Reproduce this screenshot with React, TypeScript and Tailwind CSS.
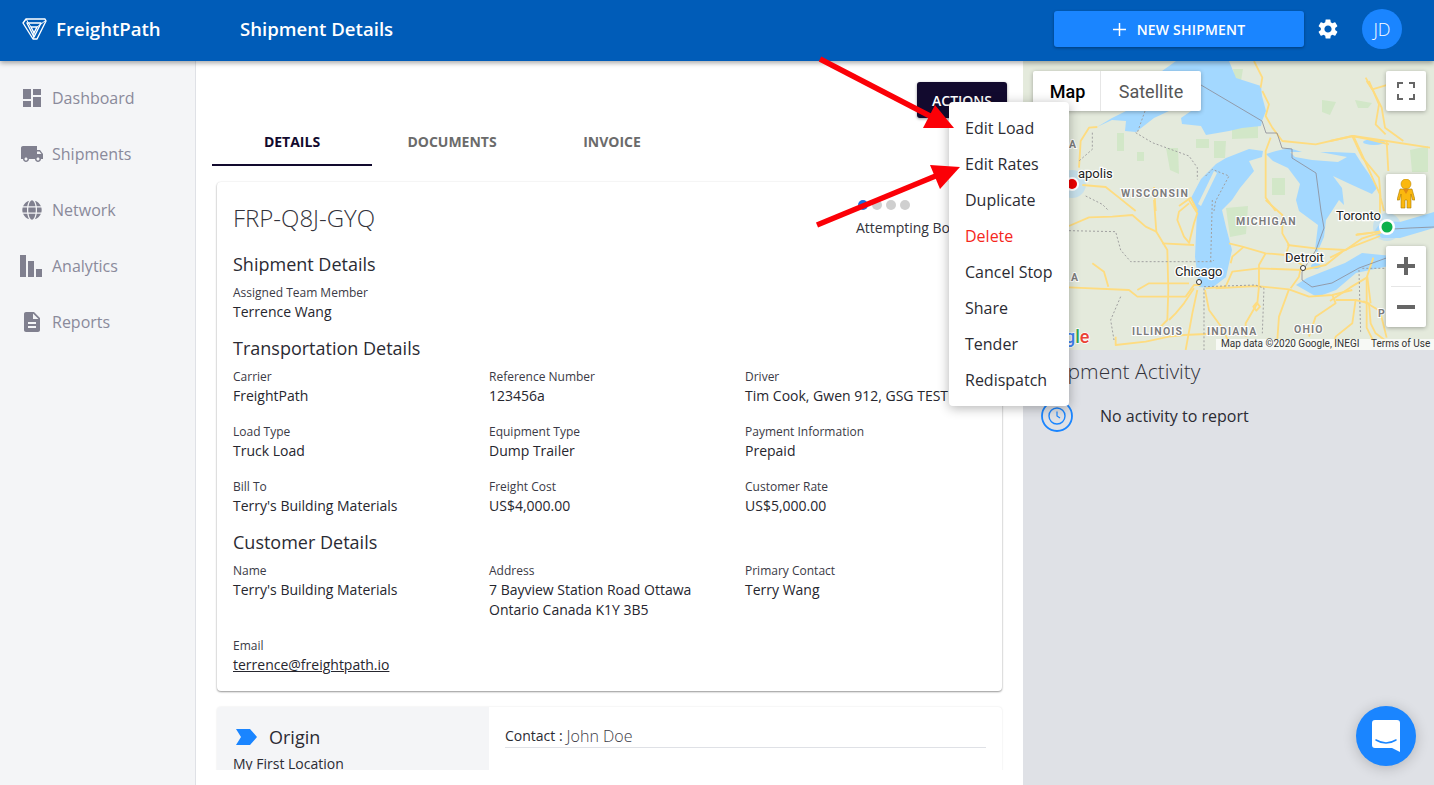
import { FaGlobe } from "react-icons/fa";
import { MdDashboard, MdDescription, MdLocalShipping, MdSettings } from "react-icons/md";

const navItems = [
	{ label: "Dashboard", icon: <MdDashboard size={24} /> },
	{ label: "Shipments", icon: <MdLocalShipping size={28} /> },
	{ label: "Network", icon: <FaGlobe size={20} /> },
	{ label: "Analytics", icon: <BarsIcon /> },
	{ label: "Reports", icon: <MdDescription size={24} /> },
];

const menuItems = ["Edit Load", "Edit Rates", "Duplicate", "Delete", "Cancel Stop", "Share", "Tender", "Redispatch"];

// road and border paths are traced from 3x crops, so each group has its own offset
const roadsNorth = [
	"M85 198 L60 200 L35 240 L30 320",
	"M40 372 L110 378 L150 410 L200 450",
	"M255 378 L260 450",
	"M330 435 L365 410 L385 450",
	"M605 230 L590 270 L590 410 L620 450",
	"M555 0 L580 50 L575 80",
	"M580 90 L600 130 L590 165 L610 200 L640 240 L740 250 L850 225 L900 235 L960 250",
	"M850 225 L880 290 L930 350 L935 410 L945 450",
	"M890 50 L910 85 L960 70",
	"M900 60 L930 130 L920 190 L950 220",
];
const roadsSouth = [
	"M0 78 L60 52 L130 50 L190 45 L230 80 L262 95",
	"M255 0 L262 95 L295 150 L298 270 L295 360 L270 385",
	"M280 130 L375 135",
	"M360 0 L385 40 L375 70 L360 130",
	"M360 10 L330 35 L325 60 L345 110 L362 130",
	"M0 262 L180 270 L205 290 L350 290 L375 255 L395 255",
	"M205 270 L240 250 L360 250",
	"M70 190 L105 215 L118 260",
	"M375 265 L345 310 L320 340 L300 360",
	"M385 270 L370 340 L350 450",
	"M408 270 L420 330 L460 385 L490 450",
	"M140 410 L140 435 L230 425 L300 410 L345 405 L410 402 L470 402",
	"M410 265 L470 260 L490 215 L570 205 L700 210",
	"M480 130 L520 140 L590 160 L650 165 L700 195",
	"M485 190 L490 170 L525 140",
	"M590 160 L570 195 L570 260 L565 310 L530 370 L530 410",
	"M553 320 L563 308 L573 320 L562 332 Z",
	"M440 265 L560 258 L660 268 L720 290 L790 285 L850 270",
	"M660 268 L630 350 L625 420",
	"M665 265 L690 230 L695 205",
	"M590 0 L640 45 L640 100 L660 135 L650 165",
	"M655 135 L740 145 L830 150 L880 115 L960 90",
	"M700 210 L770 195 L820 155",
	"M790 285 L800 310 L740 350 L720 410",
	"M800 300 L860 300 L900 310 L905 370 L920 400 L960 430",
	"M895 230 L905 310",
	"M860 300 L850 370 L800 410 L790 450",
	"M860 105 L930 95 L950 85",
];
const roadsEast = [
	"M0 240 L70 225 L170 240 L300 260",
	"M70 225 L100 290 L150 400 L150 470",
	"M170 240 L175 330",
	"M110 60 L130 90 L155 140 L165 200 L220 240",
	"M0 590 L60 560 L150 525",
	"M80 520 L130 515",
	"M0 720 L60 680 L110 650 L130 590",
	"M110 650 L110 800 L130 840",
	"M100 720 L150 750 L170 830",
];
const bordersNorth = [
	"M200 215 L250 245 L360 285 L385 320 L385 355",
	"M228 150 L205 215",
	"M70 215 L70 265 L30 300",
	"M50 405 L100 430 L120 450",
	"M410 345 L430 325 L480 345 L440 420 L435 450",
];
const bordersSouth = [
	"M0 92 L140 95 L155 150 L185 185 L430 185 L435 180",
	"M155 290 L125 360 L135 420",
	"M405 265 L405 450",
	"M430 0 L425 185",
	"M405 260 L560 255 L585 265 L580 400",
	"M870 210 L875 400",
	"M880 205 L960 205",
];

function BarsIcon() {
	return (
		<svg className="-ml-[2px]" width="22" height="22" viewBox="0 0 22 22" fill="currentColor">
			<rect x="0" y="0" width="6" height="22" />
			<rect x="8" y="6" width="6" height="16" />
			<rect x="16" y="14" width="6" height="8" />
		</svg>
	);
}

function Logo() {
	return (
		<svg width="26" height="24" viewBox="0 0 26 24" fill="none" stroke="white" strokeWidth="1.4" strokeLinejoin="round">
			<path d="M2 6 L5 2 H24 L25 4 L16 22 H12 Z" />
			<path d="M6 6 H20 L13 20 Z" />
			<path d="M10 10 H16 L13 16 Z" />
			<path d="M5 2 L10 10 M24 4 L16 10 M12 22 L13 16" strokeWidth="1" />
		</svg>
	);
}

function Field({ label, children }: { label: string; children: React.ReactNode }) {
	return (
		<div>
			<div className="h-5 text-[12px] leading-[22px] text-[#3a3a46]">{label}</div>
			<div className="text-[14px] leading-5 text-[#26262e]">{children}</div>
		</div>
	);
}

function SectionTitle({ children, className }: { children: React.ReactNode; className: string }) {
	return <h2 className={`text-[18px] leading-6 text-[#2b2b33] ${className}`}>{children}</h2>;
}

function MapDrawing() {
	return (
		<svg className="block h-full w-full" viewBox="1023 61 411 289" fill="none">
			<rect x="1023" y="61" width="411" height="289" fill="#e4eadc" />
			<g fill="#d2e7c8">
				<path d="M1117 133 L1124 133 L1124 151 L1117 151 Z" />
				<path d="M1166 148 L1178 148 L1179 174 L1170 170 Z" />
				<path d="M1137 152 L1144 152 L1144 161 L1137 161 Z" />
				<path d="M1214 141 L1226 141 L1225 158 L1214 158 Z" />
				<path d="M1232 128 L1258 126 L1258 138 L1232 139 Z" />
				<path d="M1196 139 L1209 139 L1209 148 L1196 148 Z" />
				<path d="M1233 69 L1243 69 L1241 81 L1235 81 Z" />
				<path d="M1226 208 L1248 206 L1246 234 L1230 237 Z" />
				<path d="M1272 178 L1285 178 L1285 195 L1272 195 Z" />
				<path d="M1322 100 L1336 102 L1330 115 L1322 112 Z" />
				<path d="M1410 150 L1428 146 L1428 172 L1412 172 Z" />
				<path d="M1355 100 L1372 103 L1368 108 L1358 108 Z" />
			</g>
			<g fill="#a3d8ff">
				<path d="M1097 127 L1112 118 L1126 111 L1162 71 L1176 61 L1229 61 L1236 78 L1261 86 L1262 96 L1266 111 L1262 121 L1261 126 L1242 128 L1229 131 L1206 135 L1201 126 L1182 124 L1181 118 L1191 111 L1169 111 L1154 118 L1136 132 L1125 131 L1126 121 L1112 120 Z" />
				<path d="M1263 151 L1249 149 L1226 158 L1216 164 L1201 179 L1191 198 L1197 210 L1195 257 L1199 287 L1212 288 L1226 277 L1232 250 L1226 227 L1222 210 L1232 200 L1240 188 L1254 171 L1249 161 L1262 157 Z" />
				<path d="M1266 154 L1276 151 L1289 148 L1302 152 L1332 152 L1355 153 L1362 164 L1369 174 L1377 188 L1372 194 L1350 184 L1333 176 L1342 188 L1344 205 L1339 200 L1326 220 L1324 237 L1317 253 L1315 250 L1318 225 L1299 211 L1296 200 L1300 184 L1288 168 L1273 161 Z" />
				<path d="M1296 285 L1317 297 L1336 290 L1356 273 L1389 266 L1392 256 L1362 253 L1345 263 L1322 272 L1307 278 Z" />
				<path d="M1378 226 L1385 221 L1400 222 L1434 212 L1434 228 L1400 238 L1382 238 L1374 232 Z" />
				<ellipse cx="1316" cy="266" rx="5" ry="3" />
				<ellipse cx="1374" cy="142" rx="11" ry="3" />
				<circle cx="1072" cy="184" r="14" opacity="0.45" />
				<circle cx="1387" cy="227" r="14" opacity="0.45" />
			</g>
			{/* islands and peninsulas on top of the lakes */}
			<g fill="#e4eadc">
				<path d="M1290 152 L1320 152 L1347 157 L1338 162 L1312 160 L1295 157 Z" />
				<path d="M1214 171 L1217 173 L1201 206 L1198 204 Z" />
			</g>
			<g transform="translate(1069 61) scale(0.3333)" stroke="#fedc80" strokeWidth="5.5" strokeLinejoin="round">
				{roadsNorth.map((d) => (
					<path key={d} d={d} />
				))}
			</g>
			<g transform="translate(1069 200) scale(0.3333)" stroke="#fedc80" strokeWidth="5.5" strokeLinejoin="round">
				{roadsSouth.map((d) => (
					<path key={d} d={d} />
				))}
			</g>
			<g transform="translate(1330 61) scale(0.3333)" stroke="#fedc80" strokeWidth="5.5" strokeLinejoin="round">
				{roadsEast.map((d) => (
					<path key={d} d={d} />
				))}
			</g>
			<g transform="translate(1069 61) scale(0.3333)" stroke="#a0a0a0" strokeWidth="3" strokeDasharray="6 6">
				{bordersNorth.map((d) => (
					<path key={d} d={d} />
				))}
			</g>
			<g transform="translate(1069 200) scale(0.3333)" stroke="#a0a0a0" strokeWidth="3" strokeDasharray="6 6">
				{bordersSouth.map((d) => (
					<path key={d} d={d} />
				))}
			</g>
			<g stroke="#8c8c96" strokeWidth="0.8">
				<path d="M1201 85 L1262 121 L1266 133 L1277 133 L1282 148 L1292 149 L1292 158 L1316 173 L1321 211 L1324 228 L1316 250 L1302 272 L1302 280 L1312 287 L1332 283 L1359 268 L1389 257" />
				<path d="M1393 229 L1410 228 L1434 227" />
			</g>
			<g fontFamily="Roboto, sans-serif" fontSize="13" fill="#222" stroke="#fff" strokeWidth="2.5" paintOrder="stroke">
				<text x="1078" y="178">apolis</text>
				<text x="1336" y="220">Toronto</text>
				<text x="1175" y="276">Chicago</text>
				<text x="1285" y="262">Detroit</text>
			</g>
			<g fontFamily="Roboto, sans-serif" fontSize="10.5" fontWeight="700" letterSpacing="1.2" fill="#7d7d7d" stroke="#fff" strokeWidth="2" paintOrder="stroke">
				<text x="1121" y="197">WISCONSIN</text>
				<text x="1236" y="225">MICHIGAN</text>
				<text x="1132" y="335">ILLINOIS</text>
				<text x="1207" y="335">INDIANA</text>
				<text x="1294" y="333">OHIO</text>
				<text x="1071" y="281">A</text>
				<text x="1069" y="148">A</text>
				<text x="1378" y="317">P</text>
			</g>
			<text x="1065" y="343" fontFamily="Roboto, sans-serif" fontSize="18" fontWeight="500" stroke="#fff" strokeWidth="1.5" paintOrder="stroke">
				<tspan fill="#4285f4">g</tspan>
				<tspan fill="#34a853">l</tspan>
				<tspan fill="#ea4335">e</tspan>
			</text>
			<circle cx="1199" cy="282" r="2.5" fill="#fff" stroke="#333" />
			<circle cx="1303" cy="268" r="2.5" fill="#fff" stroke="#333" />
			<rect x="1216" y="339" width="218" height="11" fill="#fff" opacity="0.7" />
			<g fontFamily="Roboto, sans-serif" fontSize="10" fill="#333">
				<text x="1221" y="347">Map data ©2020 Google, INEGI</text>
				<text x="1371" y="347">Terms of Use</text>
			</g>
			<circle cx="1072" cy="184" r="7" fill="#fff" />
			<circle cx="1072" cy="184" r="5" fill="#ee0000" />
			<circle cx="1387" cy="227" r="8" fill="#fff" />
			<circle cx="1387" cy="227" r="5.5" fill="#0cb14b" />
		</svg>
	);
}

function MapPanel() {
	return (
		<div className="relative h-[289px]">
			<MapDrawing />
			<div className="absolute left-[10px] top-[10px] flex h-10 rounded-[2px] bg-white font-['Roboto',sans-serif] text-[18px] shadow-[0_1px_4px_rgba(0,0,0,0.3)]">
				<div className="flex w-[68px] items-center justify-center border-r border-[#e6e6e6] pl-[2px] font-medium text-black">Map</div>
				<div className="flex w-[100px] items-center justify-center text-[#565656]">Satellite</div>
			</div>
			<div className="absolute left-[363px] top-[10px] flex h-10 w-10 items-center justify-center rounded-[2px] bg-white shadow-[0_1px_4px_rgba(0,0,0,0.3)]">
				<svg width="18" height="18" viewBox="0 0 18 18" fill="none" stroke="#666" strokeWidth="2">
					<path d="M1 6V1H6M12 1H17V6M17 12V17H12M6 17H1V12" />
				</svg>
			</div>
			<div className="absolute left-[363px] top-[113px] flex h-10 w-10 items-center justify-center rounded-[2px] bg-white shadow-[0_1px_4px_rgba(0,0,0,0.3)]">
				<svg width="18" height="30" viewBox="0 0 18 30">
					<circle cx="9" cy="5" r="5" fill="#fbb80e" stroke="#b07f00" strokeWidth="0.5" />
					<path d="M3 10 H15 L18 21 L15.5 21 L14 15 V29 H10 V21 H8 V29 H4 V15 L2.5 21 L0 21 Z" fill="#fbb80e" stroke="#a87a00" strokeWidth="0.6" />
					<path d="M6 10 L9 15 L12 10 Z" fill="#e28a14" />
				</svg>
			</div>
			<div className="absolute left-[363px] top-[185px] flex h-[81px] w-10 flex-col items-center rounded-[2px] bg-white shadow-[0_1px_4px_rgba(0,0,0,0.3)]">
				<div className="flex h-10 w-full items-center justify-center">
					<svg width="18" height="18" viewBox="0 0 18 18" fill="#666">
						<path d="M7 0H11V7H18V11H11V18H7V11H0V7H7Z" />
					</svg>
				</div>
				<div className="h-px w-[30px] bg-[#e6e6e6]" />
				<div className="flex h-10 w-full items-center justify-center">
					<svg width="18" height="4" viewBox="0 0 18 4" fill="#666">
						<rect width="18" height="4" />
					</svg>
				</div>
			</div>
		</div>
	);
}

export default function App() {
	return (
		<div className="relative flex h-[785px] w-[1434px] flex-col overflow-hidden bg-white font-['Open_Sans',sans-serif]">
			{/* Top bar */}
			<header className="relative z-20 flex h-[61px] shrink-0 items-center bg-[#005cb8] pb-[3px] pl-[21px] pr-8 shadow-[0_2px_5px_rgba(0,0,0,0.35)]">
				<Logo />
				<span className="ml-[9px] w-[184px] text-[18.6px] font-semibold text-white">FreightPath</span>
				<span className="text-[18.6px] font-semibold text-white">Shipment Details</span>
				<button className="ml-auto flex h-9 w-[250px] items-center justify-center rounded-[3px] bg-[#1a85ff] text-[14px] font-semibold tracking-[0.2px] text-white shadow-[0_1px_3px_rgba(0,0,0,0.35)]">
					<svg className="mr-[11px]" width="13" height="13" viewBox="0 0 13 13" stroke="white" strokeWidth="1.5">
						<path d="M6.5 0V13M0 6.5H13" />
					</svg>
					NEW SHIPMENT
				</button>
				<MdSettings className="ml-3 text-white" size={24} />
				<div className="ml-[22px] flex h-10 w-10 items-center justify-center rounded-full bg-[#1a85ff] text-[18px] font-light text-white">JD</div>
			</header>

			<div className="flex min-h-0 flex-1">
				{/* Sidebar */}
				<aside className="w-[196px] shrink-0 border-r border-[#dfe1e6] bg-[#f4f5f7] pt-[9px] text-[#8a8a9b]">
					{navItems.map((item) => (
						<div key={item.label} className="flex h-14 items-center">
							<div className="ml-5 mr-2 flex w-6 justify-center text-[#80808f]">{item.icon}</div>
							<span className="text-[16px]">{item.label}</span>
						</div>
					))}
				</aside>

				{/* Main column */}
				<main className="h-[709px] w-[827px] shrink-0 overflow-hidden pl-4 pt-[21px]">
					<div className="flex justify-end pr-4">
						<button className="h-9 w-[90px] rounded-[3px] bg-[#120a2e] text-[14px] font-semibold text-white shadow-[0_1px_3px_rgba(0,0,0,0.4)]">ACTIONS</button>
					</div>
					<div className="mt-[2px] flex">
						<div className="flex h-[46px] w-40 items-center justify-center border-b-2 border-[#120a2e] pb-[2px] text-[14px] font-bold text-[#120a2e]">DETAILS</div>
						<div className="flex h-[46px] w-40 items-center justify-center pb-1 text-[14px] font-bold text-[#6b6b6b]">DOCUMENTS</div>
						<div className="flex h-[46px] w-40 items-center justify-center pb-1 text-[14px] font-bold text-[#6b6b6b]">INVOICE</div>
					</div>

					{/* Details card */}
					<section className="ml-[5px] mt-4 w-[785px] rounded-[4px] bg-white px-4 pb-4 pt-[18px] shadow-[0_1px_2px_rgba(0,0,0,0.4),0_0_2px_rgba(0,0,0,0.08)]">
						<div className="flex h-[37px] justify-between">
							<h1 className="text-[24px] font-light leading-9 text-[#33333b]">FRP-Q8J-GYQ</h1>
							<div className="w-[130px]">
								<div className="flex gap-1 pl-[2px]">
									<span className="h-[10px] w-[10px] rounded-full bg-[#1a6fe0]" />
									<span className="h-[10px] w-[10px] rounded-full bg-[#cfcfcf]" />
									<span className="h-[10px] w-[10px] rounded-full bg-[#cfcfcf]" />
									<span className="h-[10px] w-[10px] rounded-full bg-[#cfcfcf]" />
								</div>
								<div className="mt-2 whitespace-nowrap text-[14px] leading-5 text-[#33333b]">Attempting Booking</div>
							</div>
						</div>

						<SectionTitle className="mt-[15px]">Shipment Details</SectionTitle>
						<div className="mt-[6px]">
							<Field label="Assigned Team Member">Terrence Wang</Field>
						</div>

						<SectionTitle className="mt-[14px]">Transportation Details</SectionTitle>
						<div className="mt-[6px] grid grid-cols-[256px_256px_1fr] gap-y-[15px]">
							<Field label="Carrier">FreightPath</Field>
							<Field label="Reference Number">123456a</Field>
							<Field label="Driver">Tim Cook, Gwen 912, GSG TEST</Field>
							<Field label="Load Type">Truck Load</Field>
							<Field label="Equipment Type">Dump Trailer</Field>
							<Field label="Payment Information">Prepaid</Field>
							<Field label="Bill To">Terry's Building Materials</Field>
							<Field label="Freight Cost">US$4,000.00</Field>
							<Field label="Customer Rate">US$5,000.00</Field>
						</div>

						<SectionTitle className="mt-[14px]">Customer Details</SectionTitle>
						<div className="mt-[6px] grid grid-cols-[256px_256px_1fr] gap-y-[15px]">
							<Field label="Name">Terry's Building Materials</Field>
							<Field label="Address">
								7 Bayview Station Road Ottawa
								<br />
								Ontario Canada K1Y 3B5
							</Field>
							<Field label="Primary Contact">Terry Wang</Field>
							<Field label="Email">
								<span className="underline">terrence@freightpath.io</span>
							</Field>
						</div>
					</section>

					{/* Origin card */}
					<section className="ml-[5px] mt-4 flex h-[120px] w-[785px] rounded-[4px] bg-white shadow-[0_0_2px_rgba(0,0,0,0.12)]">
						<div className="w-[272px] rounded-l-[4px] bg-[#f4f5f7] pl-4 pt-[18px]">
							<div className="flex h-6 items-center pl-[3px]">
								<svg width="21" height="16" viewBox="0 0 21 16" fill="#1a85ff">
									<path d="M0 0H14L21 8L14 16H0L5 8Z" />
								</svg>
								<span className="ml-3 text-[18px] text-[#2b2b33]">Origin</span>
							</div>
							<div className="mt-[5px] text-[14px] leading-5 text-[#2b2b33]">My First Location</div>
						</div>
						<div className="flex-1 px-4 pt-[17px]">
							<div className="flex h-6 items-center border-b border-[#dfe1e6] text-[14px] text-[#2b2b33]">
								Contact :<span className="ml-1 text-[16px] font-light text-[#3a3a46]">John Doe</span>
							</div>
						</div>
					</section>
				</main>

				{/* Map and activity */}
				<div className="min-w-0 flex-1 bg-[#dfe1e6]">
					<MapPanel />
					<div className="pl-[18px] pt-[7px]">
						<h2 className="-ml-[2px] text-[21px] font-light leading-7 text-[#33333b]">Shipment Activity</h2>
						<div className="mt-[15px] flex items-center">
							<svg width="32" height="32" viewBox="0 0 32 32" fill="none" stroke="#1a85ff">
								<circle cx="16" cy="16" r="15" strokeWidth="1.8" />
								<circle cx="16" cy="16" r="8" strokeWidth="1.4" />
								<path d="M16 11.5V16L19 18" strokeWidth="1.2" />
							</svg>
							<span className="ml-[27px] text-[16px] text-[#2b2b33]">No activity to report</span>
						</div>
					</div>
				</div>
			</div>

			{/* Actions menu */}
			<div className="absolute left-[949px] top-[102px] z-30 w-[120px] rounded-[4px] bg-white py-2 shadow-[0_2px_12px_rgba(0,0,0,0.3)]">
				{menuItems.map((item) => (
					<div key={item} className={`flex h-9 items-center whitespace-nowrap pl-4 text-[16px] ${item === "Delete" ? "text-[#f5271c]" : "text-[#2b2b33]"}`}>
						{item}
					</div>
				))}
			</div>

			{/* Annotation arrows */}
			<svg className="pointer-events-none absolute left-0 top-0 z-40" width="1434" height="785" fill="#fb0007">
				<path d="M820 59 L930 116" stroke="#fb0007" strokeWidth="5.5" />
				<path d="M935 105 L954 128 L923 128 Z" />
				<path d="M817 225 L938 175" stroke="#fb0007" strokeWidth="5.5" />
				<path d="M930 165 L960 167 L940 189 Z" />
			</svg>

			{/* Chat bubble */}
			<div className="absolute left-[1356px] top-[706px] z-30 flex h-[60px] w-[60px] items-center justify-center rounded-full bg-[#1a85ff] shadow-[0_2px_14px_rgba(0,0,0,0.2)]">
				<svg width="28" height="32" viewBox="0 0 28 32">
					<path d="M3 0H25A3 3 0 0 1 28 3V32L20 28H3A3 3 0 0 1 0 25V3A3 3 0 0 1 3 0Z" fill="white" />
					<path d="M4 20Q14 26 24 20" fill="none" stroke="#1a85ff" strokeWidth="1.5" strokeLinecap="round" />
				</svg>
			</div>
		</div>
	);
}
